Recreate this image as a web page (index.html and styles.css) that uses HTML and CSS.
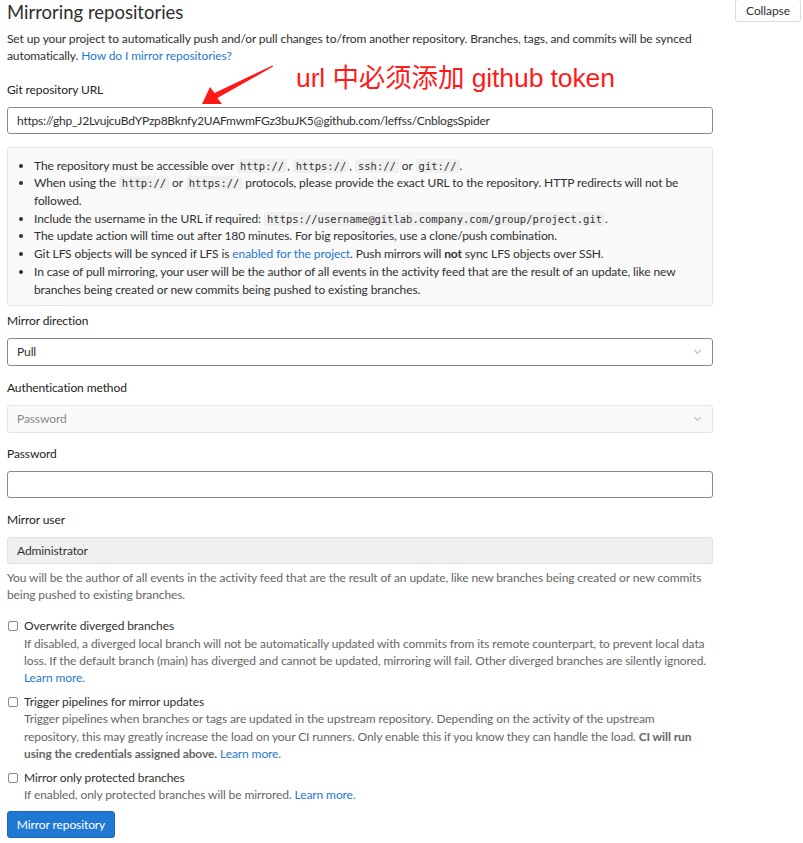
FILE: index.html
```html
<!DOCTYPE html>
<html>
<head>
<meta charset="utf-8">
<link rel="stylesheet" href="styles.css">
</head>
<body>
<div class="page">
  <div class="main">
    <h4 class="title">Mirroring repositories</h4>
    <p class="desc">Set up your project to automatically push and/or pull changes to/from another repository. Branches, tags, and commits will be synced automatically. <a href="#">How do I mirror repositories?</a></p>

    <div class="group first">
      <label class="label">Git repository URL</label>
      <div class="input url">https://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@github.com/leffss/CnblogsSpider</div>
    </div>

    <div class="info">
      <ul>
        <li>The repository must be accessible over <code>http://</code>, <code>https://</code>, <code>ssh://</code> or <code>git://</code>.</li>
        <li>When using the <code>http://</code> or <code>https://</code> protocols, please provide the exact URL to the repository. HTTP redirects will not be followed.</li>
        <li>Include the username in the URL if required: <code>https://username@gitlab.company.com/group/project.git</code>.</li>
        <li>The update action will time out after 180 minutes. For big repositories, use a clone/push combination.</li>
        <li>Git LFS objects will be synced if LFS is <a href="#">enabled for the project</a>. Push mirrors will <b>not</b> sync LFS objects over SSH.</li>
        <li>In case of pull mirroring, your user will be the author of all events in the activity feed that are the result of an update, like new branches being created or new commits being pushed to existing branches.</li>
      </ul>
    </div>

    <div class="group after-info">
      <label class="label">Mirror direction</label>
      <div class="input select">Pull<span class="chev"></span></div>
    </div>

    <div class="group">
      <label class="label">Authentication method</label>
      <div class="input select disabled">Password<span class="chev"></span></div>
    </div>

    <div class="group">
      <label class="label">Password</label>
      <div class="input"></div>
    </div>

    <div class="group">
      <label class="label">Mirror user</label>
      <div class="input readonly">Administrator</div>
      <p class="help">You will be the author of all events in the activity feed that are the result of an update, like new branches being created or new commits being pushed to existing branches.</p>
    </div>

    <div class="check first">
      <span class="box"></span>
      <div class="check-body">
        <div class="check-label">Overwrite diverged branches</div>
        <p class="help">If disabled, a diverged local branch will not be automatically updated with commits from its remote counterpart, to prevent local data loss. If the default branch (main) has diverged and cannot be updated, mirroring will fail. Other diverged branches are silently ignored. <a href="#">Learn more.</a></p>
      </div>
    </div>

    <div class="check">
      <span class="box"></span>
      <div class="check-body">
        <div class="check-label">Trigger pipelines for mirror updates</div>
        <p class="help">Trigger pipelines when branches or tags are updated in the upstream repository. Depending on the activity of the upstream repository, this may greatly increase the load on your CI runners. Only enable this if you know they can handle the load. <b>CI will run using the credentials assigned above.</b> <a href="#">Learn more.</a></p>
      </div>
    </div>

    <div class="check">
      <span class="box"></span>
      <div class="check-body">
        <div class="check-label">Mirror only protected branches</div>
        <p class="help">If enabled, only protected branches will be mirrored. <a href="#">Learn more.</a></p>
      </div>
    </div>

    <button class="btn-primary">Mirror repository</button>
  </div>
  <div class="side">
    <button class="btn">Collapse</button>
  </div>

  <div class="note">url 中必须添加 github token</div>
  <svg class="arrow" width="803" height="120" viewBox="0 0 803 120">
    <polygon points="202,104 210,87 214.6,92.9 272.4,65.4 273.1,66.6 217.4,98.1 222,104" fill="#ff1a1a"/>
  </svg>
</div>
</body>
</html>
```

FILE: styles.css
```css
* { box-sizing: border-box; }
html, body { margin: 0; padding: 0; background: #fff; }
body {
  font-family: Lato, "Noto Sans", sans-serif;
  font-size: 12px;
  line-height: 17.3px;
  letter-spacing: -0.1px;
  color: #303030;
}
a { color: #1f78d1; text-decoration: none; }
.page {
  position: relative;
  display: flex;
  gap: 22px;
  padding-left: 7px;
}
.main { width: 706px; }
.btn {
  font-family: inherit;
  font-size: 12px;
  letter-spacing: -0.1px;
  color: #303030;
  background: #fff;
  border: 1px solid #dbdbdb;
  border-radius: 3px;
  height: 23px;
  width: 66px;
  padding: 0;
  margin-top: -1px;
}
.title {
  margin: 0;
  font-size: 18.5px;
  font-weight: normal;
  letter-spacing: 0;
  line-height: 24px;
  color: #2e2e2e;
}
.desc { margin: 5.5px 0 0; }
.group { margin-top: 12.5px; }
.group.first { margin-top: 16.5px; }
.group.after-info { margin-top: 6px; }
.label {
  display: block;
  line-height: 17.5px;
  margin-bottom: 8.5px;
  color: #222;
}
.input {
  height: 27px;
  border: 1px solid #8a8a8a;
  border-radius: 3px;
  padding: 0 9px;
  line-height: 25px;
  position: relative;
  color: #303030;
}
.url { letter-spacing: -0.22px; }
.select { height: 28px; line-height: 26px; }
.chev {
  position: absolute;
  right: 12px;
  top: 9px;
  width: 5px;
  height: 5px;
  border-right: 1px solid #b5b5b5;
  border-bottom: 1px solid #b5b5b5;
  transform: rotate(45deg);
}
.disabled {
  background: #fafafa;
  border-color: #e5e5e5;
  color: #888;
}
.readonly {
  background: #f0f0f0;
  border-color: #e0e0e0;
}
.info {
  margin-top: 13px;
  background: #fafafa;
  border: 1px solid #e5e5e5;
  border-radius: 3px;
  padding: 9px 10px 7px 26px;
}
.info ul { margin: 0; padding: 0; }
.info li { line-height: 17.7px; }
code {
  font-family: "DejaVu Sans Mono", monospace;
  font-size: 10.5px;
  line-height: 1;
  letter-spacing: 0;
  background: #f0f0f0;
  border-radius: 3px;
  padding: 1px 3px;
  color: #303030;
}
.help { margin: 5px 0 0; color: #666; }
.check-body { width: 685px; }
.check-body .help { margin-top: 0; }
.check {
  display: flex;
  margin-top: 6.5px;
}
.check.first { margin-top: 14px; }
.box {
  flex: none;
  width: 10px;
  height: 10px;
  border: 1px solid #8a8a8a;
  border-radius: 2px;
  margin: 4px 6px 0 1px;
}
.check-label { color: #303030; }
.btn-primary {
  margin-top: 8px;
  height: 27px;
  width: 108px;
  background: #1f78d1;
  border: 1px solid #1b69b6;
  border-radius: 3px;
  color: #fff;
  font-family: inherit;
  font-size: 12px;
  letter-spacing: -0.1px;
  padding: 0;
}
.note {
  position: absolute;
  left: 296px;
  top: 62px;
  font-family: "Liberation Sans", "Noto Sans CJK SC", sans-serif;
  font-size: 26.5px;
  line-height: 32px;
  color: #ff1a1a;
}
.arrow {
  position: absolute;
  left: 0;
  top: 0;
  pointer-events: none;
}
```
